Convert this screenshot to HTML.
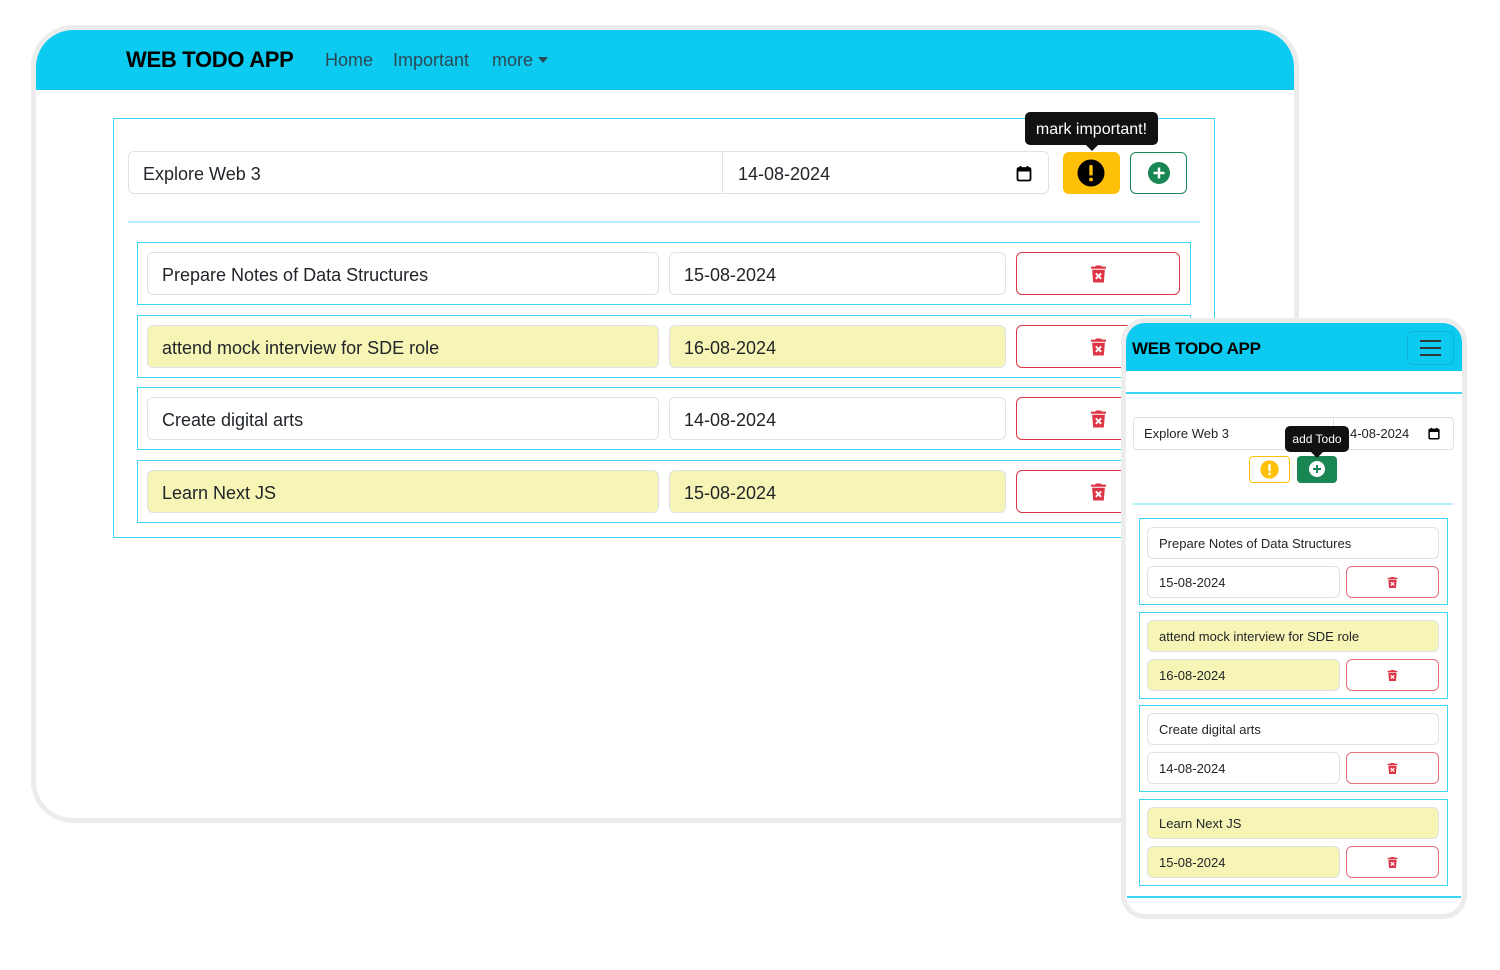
<!DOCTYPE html>
<html><head><meta charset="utf-8"><style>
*{box-sizing:border-box;margin:0;padding:0}
body{width:1500px;height:970px;background:#fff;position:relative;overflow:hidden;font-family:"Liberation Sans",sans-serif;color:#212529}
.a{position:absolute}
.frame{border:5px solid #ececec;background:#fff;overflow:hidden}
.inp{position:absolute;border:1px solid #dee2e6;border-radius:6px;background:#fff;display:flex;align-items:center}
.d{padding-top:3px}
.y{background:#f6f5b5}
.del{position:absolute;border:1px solid #dc3545;border-radius:6px;display:flex;align-items:center;justify-content:center;background:#fff}
.box{position:absolute;border:1px solid #3dd5f3}
.tip{position:absolute;background:#111;color:#fff;border-radius:5px;display:flex;align-items:center;justify-content:center}
.tip:after{content:"";position:absolute;bottom:-6px;left:50%;margin-left:-6px;border-left:6px solid transparent;border-right:6px solid transparent;border-top:6px solid #111}
</style></head><body>
<svg width="0" height="0" style="position:absolute"><defs>
<symbol id="trash" viewBox="0 0 16 16"><path fill="#dc3545" d="M5.5 0h5l.5 1H15v2H1V1h4zM2 4h12l-1 12H3z"/><path stroke="#fff" stroke-width="1.8" d="M5.5 7.5l5 5M10.5 7.5l-5 5"/></symbol>
</defs></svg>

<!-- Desktop -->
<div class="a frame" style="left:31px;top:25px;width:1268px;height:798px;border-radius:42px">
  <div class="a" style="left:0;top:0;width:1258px;height:60px;background:#0dcaf0"></div>
  <div class="a" style="left:90px;top:17px;font-size:22px;font-weight:bold;color:#000;letter-spacing:-0.3px">WEB TODO APP</div>
  <div class="a" style="left:289px;top:20px;font-size:18px;color:#2b4a55">Home</div>
  <div class="a" style="left:357px;top:20px;font-size:18px;color:#2b4a55">Important</div>
  <div class="a" style="left:456px;top:20px;font-size:18px;color:#2b4a55">more <span style="display:inline-block;border-left:5px solid transparent;border-right:5px solid transparent;border-top:6px solid #2b4a55;vertical-align:3px"></span></div>
</div>
<div class="box" style="left:113px;top:118px;width:1102px;height:420px"></div>
<div class="inp d" style="left:128px;top:151px;width:595px;height:43px;border-radius:6px 0 0 6px;padding-left:14px;font-size:18px">Explore Web 3</div>
<div class="inp d" style="left:722px;top:151px;width:327px;height:43px;border-radius:0 6px 6px 0;padding-left:15px;font-size:18px">14-08-2024
<svg class="a" style="left:293px;top:13px" width="16" height="17" viewBox="0 0 16 17"><rect x="1.5" y="3" width="13" height="12.5" rx="1.5" fill="none" stroke="#000" stroke-width="1.8"/><rect x="1.5" y="3" width="13" height="3.5" fill="#000"/><path d="M4.5 1v3M11.5 1v3" stroke="#000" stroke-width="1.8"/></svg></div>
<div class="a" style="left:1063px;top:152px;width:57px;height:42px;background:#ffc107;border-radius:6px"><svg class="a" style="left:14px;top:7px" width="28" height="28" viewBox="0 0 28 28"><circle cx="14" cy="14" r="13.5" fill="#000"/><rect x="12.3" y="6" width="3.4" height="10.5" rx="1" fill="#ffc107"/><circle cx="14" cy="20.5" r="1.9" fill="#ffc107"/></svg></div>
<div class="a" style="left:1130px;top:152px;width:57px;height:42px;border:1px solid #198754;border-radius:6px"><svg class="a" style="left:17px;top:9px" width="22" height="22" viewBox="0 0 22 22"><circle cx="11" cy="11" r="11" fill="#198754"/><path d="M11 5.5v11M5.5 11h11" stroke="#fff" stroke-width="2.4"/></svg></div>
<div class="tip" style="left:1025px;top:112px;width:133px;height:33px;font-size:16px;padding-top:2px">mark important!</div>
<div class="a" style="left:128px;top:221px;width:1072px;height:2px;background:#b6effb"></div>

<div class="box" style="left:137px;top:242px;width:1054px;height:63px"></div>
<div class="inp d" style="left:147px;top:252px;width:512px;height:43px;padding-left:14px;font-size:18px">Prepare Notes of Data Structures</div>
<div class="inp d" style="left:669px;top:252px;width:337px;height:43px;padding-left:14px;font-size:18px">15-08-2024</div>
<div class="del" style="left:1016px;top:252px;width:164px;height:43px"><svg width="17" height="20"><use href="#trash"/></svg></div>

<div class="box" style="left:137px;top:315px;width:1054px;height:63px"></div>
<div class="inp y d" style="left:147px;top:325px;width:512px;height:43px;padding-left:14px;font-size:18px">attend mock interview for SDE role</div>
<div class="inp y d" style="left:669px;top:325px;width:337px;height:43px;padding-left:14px;font-size:18px">16-08-2024</div>
<div class="del" style="left:1016px;top:325px;width:164px;height:43px"><svg width="17" height="20"><use href="#trash"/></svg></div>

<div class="box" style="left:137px;top:387px;width:1054px;height:63px"></div>
<div class="inp d" style="left:147px;top:397px;width:512px;height:43px;padding-left:14px;font-size:18px">Create digital arts</div>
<div class="inp d" style="left:669px;top:397px;width:337px;height:43px;padding-left:14px;font-size:18px">14-08-2024</div>
<div class="del" style="left:1016px;top:397px;width:164px;height:43px"><svg width="17" height="20"><use href="#trash"/></svg></div>

<div class="box" style="left:137px;top:460px;width:1054px;height:63px"></div>
<div class="inp y d" style="left:147px;top:470px;width:512px;height:43px;padding-left:14px;font-size:18px">Learn Next JS</div>
<div class="inp y d" style="left:669px;top:470px;width:337px;height:43px;padding-left:14px;font-size:18px">15-08-2024</div>
<div class="del" style="left:1016px;top:470px;width:164px;height:43px"><svg width="17" height="20"><use href="#trash"/></svg></div>

<!-- Mobile -->
<div class="a frame" style="left:1121px;top:318px;width:346px;height:601px;border-radius:24px">
  <div class="a" style="left:0;top:0;width:336px;height:48px;background:#0dcaf0"></div>
  <div class="a" style="left:6px;top:16px;font-size:17px;font-weight:bold;color:#000;letter-spacing:-0.3px">WEB TODO APP</div>
  <div class="a" style="left:281px;top:8px;width:47px;height:34px;border:1px solid rgba(0,0,0,.1);border-radius:5px"><div class="a" style="left:12px;top:8px;width:21px;height:2px;background:#333;box-shadow:0 7px 0 #333,0 14px 0 #333"></div></div>
  <div class="a" style="left:0;top:69px;width:336px;height:2px;background:#3dd5f3"></div>
  <div class="inp" style="left:7px;top:94px;width:201px;height:33px;border-radius:4px 0 0 4px;padding-left:10px;font-size:13px">Explore Web 3</div>
  <div class="inp" style="left:207px;top:94px;width:121px;height:33px;border-radius:0 4px 4px 0;padding-left:16px;font-size:13px">4-08-2024
  <svg class="a" style="left:94px;top:9px" width="12" height="13" viewBox="0 0 16 17"><rect x="1.5" y="3" width="13" height="12.5" rx="1.5" fill="none" stroke="#000" stroke-width="2"/><rect x="1.5" y="3" width="13" height="3.5" fill="#000"/><path d="M4.5 1v3M11.5 1v3" stroke="#000" stroke-width="2"/></svg></div>
  <div class="a" style="left:123px;top:133px;width:41px;height:27px;border:1px solid #ffc107;border-radius:4px"><svg class="a" style="left:10px;top:3px" width="19" height="19" viewBox="0 0 28 28"><circle cx="14" cy="14" r="13.5" fill="#ffc107"/><rect x="12.3" y="6" width="3.4" height="10.5" rx="1" fill="#fff"/><circle cx="14" cy="20.5" r="1.9" fill="#fff"/></svg></div>
  <div class="a" style="left:171px;top:133px;width:40px;height:27px;background:#198754;border-radius:4px"><svg class="a" style="left:12px;top:5px" width="16" height="16" viewBox="0 0 22 22"><circle cx="11" cy="11" r="11" fill="#fff"/><path d="M11 5.5v11M5.5 11h11" stroke="#198754" stroke-width="2.6"/></svg></div>
  <div class="tip" style="left:159px;top:103px;width:64px;height:26px;font-size:12px">add Todo</div>
  <div class="a" style="left:7px;top:180px;width:320px;height:2px;background:#b6effb"></div>

  <div class="box" style="left:13px;top:195px;width:309px;height:87px"></div>
  <div class="inp" style="left:21px;top:204px;width:292px;height:32px;padding-left:11px;font-size:13px">Prepare Notes of Data Structures</div>
  <div class="inp" style="left:21px;top:243px;width:193px;height:32px;padding-left:11px;font-size:13px">15-08-2024</div>
  <div class="del" style="left:220px;top:243px;width:93px;height:32px;border-color:#e4707c"><svg width="11" height="13"><use href="#trash"/></svg></div>

  <div class="box" style="left:13px;top:289px;width:309px;height:87px"></div>
  <div class="inp y" style="left:21px;top:297px;width:292px;height:32px;padding-left:11px;font-size:13px">attend mock interview for SDE role</div>
  <div class="inp y" style="left:21px;top:336px;width:193px;height:32px;padding-left:11px;font-size:13px">16-08-2024</div>
  <div class="del" style="left:220px;top:336px;width:93px;height:32px;border-color:#e4707c"><svg width="11" height="13"><use href="#trash"/></svg></div>

  <div class="box" style="left:13px;top:382px;width:309px;height:87px"></div>
  <div class="inp" style="left:21px;top:390px;width:292px;height:32px;padding-left:11px;font-size:13px">Create digital arts</div>
  <div class="inp" style="left:21px;top:429px;width:193px;height:32px;padding-left:11px;font-size:13px">14-08-2024</div>
  <div class="del" style="left:220px;top:429px;width:93px;height:32px;border-color:#e4707c"><svg width="11" height="13"><use href="#trash"/></svg></div>

  <div class="box" style="left:13px;top:476px;width:309px;height:87px"></div>
  <div class="inp y" style="left:21px;top:484px;width:292px;height:32px;padding-left:11px;font-size:13px">Learn Next JS</div>
  <div class="inp y" style="left:21px;top:523px;width:193px;height:32px;padding-left:11px;font-size:13px">15-08-2024</div>
  <div class="del" style="left:220px;top:523px;width:93px;height:32px;border-color:#e4707c"><svg width="11" height="13"><use href="#trash"/></svg></div>

  <div class="a" style="left:1px;top:573px;width:334px;height:2px;background:#3dd5f3"></div>
</div>
</body></html>
